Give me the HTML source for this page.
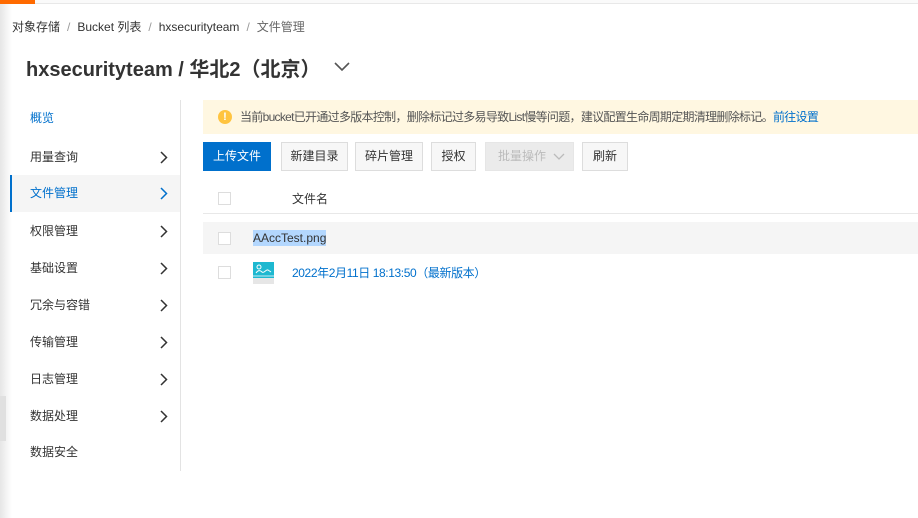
<!DOCTYPE html>
<html><head><meta charset="utf-8"><style>
*{margin:0;padding:0;box-sizing:border-box}
body{width:918px;height:518px;overflow:hidden;background:#fff;font-family:"Liberation Sans","Noto Sans CJK SC",sans-serif;color:#333;position:relative}
.abs{position:absolute}
.shadow{left:0;top:0;width:12px;height:518px;background:linear-gradient(90deg,#e6e6e6,#fff)}
.topbar{left:0;top:0;width:918px;height:4px;border-bottom:1px solid #e8e8e8;background:#fafafa}
.orange{left:0;top:0;width:35px;height:4px;background:#ff6a00}
.crumb{left:12px;top:18px;font-size:12px;color:#333;white-space:nowrap}
.crumb span{color:#999;margin:0 7px}
.crumb .last{color:#666;margin:0}
.title{left:26px;top:53px;font-size:20px;font-weight:bold;color:#333;white-space:nowrap}
.chev{position:absolute}
.side{left:10px;top:100px;width:171px;height:371px;border-right:1px solid #e3e3e3}
.item{position:absolute;left:0;width:170px;height:37px;font-size:12px;color:#333;padding-left:20px;line-height:37px}
.item.on{background:#f5f5f5;color:#0070cc;border-left:2px solid #0070cc;padding-left:18px}
.item svg{position:absolute;right:12px;top:12px}
.notice{left:203px;top:100px;width:715px;height:34px;background:#fff7e1;font-size:12px;color:#555;line-height:34px;padding-left:37px;white-space:nowrap;letter-spacing:-0.7px}
.notice a{color:#0070cc;text-decoration:none}
.warn{left:218px;top:110px;width:14px;height:14px;border-radius:50%;background:#ffc440;color:#fff;font-size:11px;font-weight:bold;text-align:center;line-height:14px}
.btn{position:absolute;top:142px;height:29px;border:1px solid #ddd;background:#f7f7f7;font-size:12px;color:#333;text-align:center;line-height:27px}
.cb{position:absolute;width:13px;height:13px;border:1px solid #ddd;background:#fff}
</style></head><body>
<div class="abs shadow"></div>
<div class="abs topbar"></div>
<div class="abs orange"></div>
<div class="abs crumb">对象存储<span>/</span>Bucket 列表<span>/</span>hxsecurityteam<span>/</span><b class="last" style="font-weight:normal">文件管理</b></div>
<div class="abs title">hxsecurityteam / 华北2（北京）</div>
<svg class="chev" style="left:334px;top:62px" width="16" height="10" viewBox="0 0 16 10"><path d="M1 1l7 7 7-7" fill="none" stroke="#555" stroke-width="1.6"/></svg>

<div class="abs side">
<div class="item" style="top:0;color:#0070cc">概览</div>
<div class="item" style="top:39px">用量查询<svg width="8" height="13" viewBox="0 0 8 13"><path d="M1 1l5.5 5.5L1 12" fill="none" stroke="#333" stroke-width="1.5"/></svg></div>
<div class="item on" style="top:75px">文件管理<svg width="8" height="13" viewBox="0 0 8 13"><path d="M1 1l5.5 5.5L1 12" fill="none" stroke="#0070cc" stroke-width="1.5"/></svg></div>
<div class="item" style="top:113px">权限管理<svg width="8" height="13" viewBox="0 0 8 13"><path d="M1 1l5.5 5.5L1 12" fill="none" stroke="#333" stroke-width="1.5"/></svg></div>
<div class="item" style="top:150px">基础设置<svg width="8" height="13" viewBox="0 0 8 13"><path d="M1 1l5.5 5.5L1 12" fill="none" stroke="#333" stroke-width="1.5"/></svg></div>
<div class="item" style="top:187px">冗余与容错<svg width="8" height="13" viewBox="0 0 8 13"><path d="M1 1l5.5 5.5L1 12" fill="none" stroke="#333" stroke-width="1.5"/></svg></div>
<div class="item" style="top:224px">传输管理<svg width="8" height="13" viewBox="0 0 8 13"><path d="M1 1l5.5 5.5L1 12" fill="none" stroke="#333" stroke-width="1.5"/></svg></div>
<div class="item" style="top:261px">日志管理<svg width="8" height="13" viewBox="0 0 8 13"><path d="M1 1l5.5 5.5L1 12" fill="none" stroke="#333" stroke-width="1.5"/></svg></div>
<div class="item" style="top:298px">数据处理<svg width="8" height="13" viewBox="0 0 8 13"><path d="M1 1l5.5 5.5L1 12" fill="none" stroke="#333" stroke-width="1.5"/></svg></div>
<div class="item" style="top:334px">数据安全</div>
</div>
<div class="abs" style="left:0;top:396px;width:6px;height:45px;background:#e0e0e0"></div>

<div class="abs notice">当前bucket已开通过多版本控制，删除标记过多易导致List慢等问题，建议配置生命周期定期清理删除标记。<a>前往设置</a></div>
<div class="abs warn">!</div>

<div class="btn" style="left:203px;width:68px;background:#0070cc;border-color:#0070cc;color:#fff">上传文件</div>
<div class="btn" style="left:281px;width:67px">新建目录</div>
<div class="btn" style="left:355px;width:68px">碎片管理</div>
<div class="btn" style="left:431px;width:45px">授权</div>
<div class="btn" style="left:485px;width:89px;background:#ebebeb;border-color:#e6e6e6;color:#bbb;text-align:left;padding-left:12px">批量操作<svg style="position:absolute;left:67px;top:10px" width="12" height="8" viewBox="0 0 12 8"><path d="M1 1l5 5 5-5" fill="none" stroke="#bbb" stroke-width="1.3"/></svg></div>
<div class="btn" style="left:582px;width:46px">刷新</div>

<div class="abs" style="left:203px;top:183px;width:715px;height:31px;border-bottom:1px solid #e8e8e8"></div>
<div class="cb" style="left:218px;top:192px"></div>
<div class="abs" style="left:292px;top:190px;font-size:12px;color:#333">文件名</div>

<div class="abs" style="left:203px;top:222px;width:715px;height:32px;background:#f5f5f5"></div>
<div class="cb" style="left:218px;top:232px"></div>
<div class="abs" style="left:253px;top:230px;font-size:12px;color:#333;background:#b3d7fe;padding:1px 0;line-height:14px">AAccTest.png</div>

<div class="cb" style="left:218px;top:266px"></div>
<svg class="abs" style="left:253px;top:262px" width="21" height="22" viewBox="0 0 21 22"><rect width="21" height="16" fill="#1eb8d0"/><rect y="16" width="21" height="6" fill="#e6e6e6"/><circle cx="6" cy="5" r="2" fill="none" stroke="#fff" stroke-width="1"/><path d="M3 11c2-3 4-3 6-1 2 2 4-3 6-2l3 2" fill="none" stroke="#fff" stroke-width="1"/><path d="M0 14h21" stroke="#fff" stroke-width=".8"/></svg>
<div class="abs" style="left:292px;top:264px;font-size:12px;color:#0070cc;white-space:nowrap;letter-spacing:-0.4px">2022年2月11日 18:13:50（最新版本）</div>
</body></html>
